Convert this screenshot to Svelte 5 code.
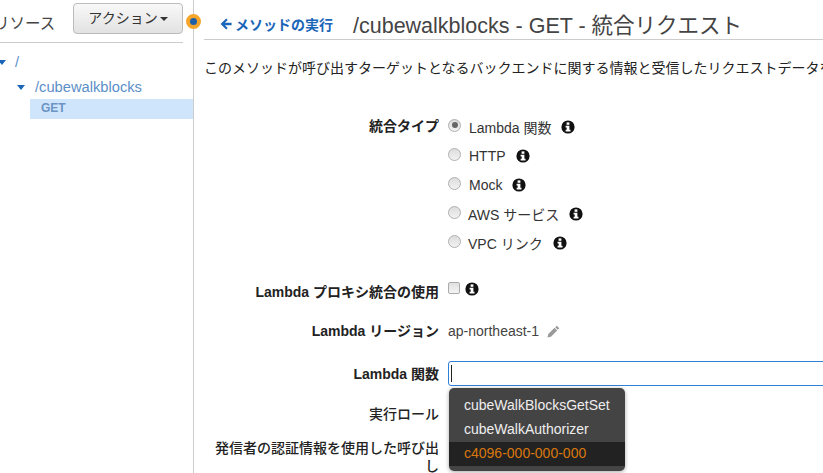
<script>
  const types = [
    { label: 'Lambda 関数', checked: true },
    { label: 'HTTP', checked: false },
    { label: 'Mock', checked: false },
    { label: 'AWS サービス', checked: false, tight: true },
    { label: 'VPC リンク', checked: false, tight: true }
  ];
  const options = ['cubeWalkBlocksGetSet', 'cubeWalkAuthorizer', 'c4096-000-000-000'];
</script>

{#snippet info()}
  <svg class="info" viewBox="0 0 14 14" aria-hidden="true">
    <circle cx="7" cy="7" r="6.6" fill="#111" />
    <rect x="5.6" y="2.4" width="2.8" height="2.4" fill="#fff" />
    <path d="M4.6 5.8h3.8v4h1.1v1.7H4.6V9.8h1.1V7.5H4.6z" fill="#fff" />
  </svg>
{/snippet}

<div class="page">
  <aside class="side">
    <div class="side-head">
      <span class="side-title">リソース</span>
      <button class="action">アクション<i class="caret"></i></button>
    </div>
    <ul class="tree">
      <li class="root"><i class="tri"></i><span>/</span></li>
      <li class="res"><i class="tri"></i><span>/cubewalkblocks</span></li>
      <li class="method">GET</li>
    </ul>
    <span class="handle"></span>
  </aside>

  <main class="main">
    <header class="head">
      <a class="back"><svg viewBox="0 0 12 12" aria-hidden="true"><path d="M6.2.6 .6 6l5.6 5.4 1.5-1.5-2.8-2.6H11.6V4.7H4.9l2.8-2.6z" /></svg>メソッドの実行</a>
      <h1>/cubewalkblocks - GET - 統合リクエスト</h1>
    </header>
    <p class="desc">このメソッドが呼び出すターゲットとなるバックエンドに関する情報と受信したリクエストデータを</p>

    <div class="form">
      <div class="row types">
        <div class="lbl strong">統合タイプ</div>
        <div class="radios">
          {#each types as t}
            <div class="radio-line" class:tight={t.tight}>
              <span class="radio" class:on={t.checked}></span>
              <span class="rtext">{t.label}</span>
              {@render info()}
            </div>
          {/each}
        </div>
      </div>

      <div class="row proxy">
        <div class="lbl strong">Lambda プロキシ統合の使用</div>
        <div class="val"><span class="check"></span>{@render info()}</div>
      </div>

      <div class="row region">
        <div class="lbl strong">Lambda リージョン</div>
        <div class="val">ap-northeast-1
          <svg class="pencil" viewBox="0 0 12 12" aria-hidden="true"><path d="M9 .6 11.4 3 10 4.4 7.6 2zM7 2.6 9.4 5 3.6 10.8.5 11.5l.7-3.1z" /></svg>
        </div>
      </div>

      <div class="row fn">
        <div class="lbl strong">Lambda 関数</div>
        <div class="input-wrap">
          <div class="input"><i class="cursor"></i></div>
          <ul class="menu">
            {#each options as o, i}
              <li class:active={i === 2}>{o}</li>
            {/each}
          </ul>
        </div>
      </div>

      <div class="row role"><div class="lbl">実行ロール</div></div>
      <div class="row caller"><div class="lbl">発信者の認証情報を使用した呼び出し</div></div>
    </div>
  </main>
</div>

<style>
  :global(body) { margin: 0; background: #fff; }
  .page {
    display: flex;
    width: 823px;
    height: 473px;
    overflow: hidden;
    font-family: "Liberation Sans", "Noto Sans CJK JP", sans-serif;
    font-size: 14px;
    color: #333;
  }
  .side {
    position: relative;
    z-index: 1;
    box-sizing: border-box;
    width: 194px;
    flex: none;
    border-right: 1px solid #ccc;
  }
  .side-head {
    box-sizing: border-box;
    display: flex;
    align-items: flex-start;
    justify-content: space-between;
    height: 43px;
    width: 183px;
    padding-top: 3px;
    border-bottom: 1px solid #ccc;
  }
  .side-title {
    font-size: 15.5px;
    color: #444;
    margin-left: -6px;
    margin-top: 9px;
    line-height: 24px;
    white-space: nowrap;
  }
  .action {
    box-sizing: border-box;
    width: 110px;
    height: 31px;
    padding: 0 0 4px;
    border: 1px solid #bbb;
    border-radius: 4px;
    background: linear-gradient(#f8f8f8, #e2e2e2);
    color: #333;
    font: inherit;
    white-space: nowrap;
  }
  .caret {
    display: inline-block;
    margin-left: 2px;
    vertical-align: 2px;
    border-top: 4px solid #333;
    border-left: 4px solid transparent;
    border-right: 4px solid transparent;
  }
  .handle {
    position: absolute;
    left: 186px;
    top: 14px;
    width: 7px;
    height: 7px;
    border-radius: 50%;
    background: #1f5fa8;
    border: 4px solid #f5a52a;
    box-sizing: content-box;
  }
  .tree { list-style: none; margin: 0; padding: 0; color: #5b8fc8; }
  .tree .tri {
    display: inline-block;
    border-top: 5px solid #1a66b8;
    border-left: 4px solid transparent;
    border-right: 4px solid transparent;
    vertical-align: 2px;
  }
  .root { display: flex; align-items: center; gap: 9px; height: 22px; margin: 8px 0 0 -2px; font-size: 14.7px; }
  .res { display: flex; align-items: center; gap: 10px; margin: 3px 0 0 17px; height: 22px; font-size: 14.7px; }
  .method {
    margin: 1px 0 0 30px;
    height: 20px;
    line-height: 19px;
    padding-left: 11px;
    background: #cfe5fc;
    color: #6b93c4;
    font-weight: 700;
    font-size: 12px;
  }
  .main { flex: 1; min-width: 0; padding-left: 10px; }
  .head {
    box-sizing: border-box;
    display: flex;
    align-items: center;
    height: 40px;
    padding-left: 16px;
    padding-top: 8px;
    border-bottom: 1px solid #ccc;
    white-space: nowrap;
  }
  .back {
    display: flex;
    align-items: center;
    gap: 3px;
    width: 118px;
    flex: none;
    color: #1a66b8;
    font-weight: 700;
    font-size: 14px;
  }
  .back svg { width: 12px; height: 12px; fill: #1a66b8; }
  h1 {
    margin: 0 0 0 15px;
    font-weight: 400;
    font-size: 21.5px;
    color: #444;
  }
  .desc {
    margin: 18px 0 0 0;
    white-space: nowrap;
    font-size: 14px;
    color: #222;
    line-height: 20px;
  }
  .row { display: flex; }
  .lbl {
    width: 235px;
    flex: none;
    box-sizing: border-box;
    padding-left: 10px;
    text-align: right;
    color: #222;
    font-weight: 500;
    font-size: 14px;
    line-height: 18px;
  }
  .lbl.strong { font-weight: 700; }
  .types { margin-top: 34px; }
  .types .lbl { padding-top: 5px; }
  .radios { margin-left: 9px; }
  .radio-line {
    display: flex;
    align-items: center;
    height: 29px;
    color: #333;
    font-size: 14px;
  }
  .radio {
    box-sizing: border-box;
    position: relative;
    flex: none;
    width: 13px;
    height: 13px;
    border-radius: 50%;
    border: 1px solid #b0b0b0;
    background: linear-gradient(#dcdcdc, #f2f2f2);
    margin-right: 8px;
    margin-top: -3px;
  }
  .radio.on::after {
    content: "";
    position: absolute;
    inset: 2.5px;
    border-radius: 50%;
    background: #666;
  }
  .rtext { margin-right: 10px; }
  .tight .rtext { margin-left: -1px; }
  .info { width: 14px; height: 14px; flex: none; }
  .proxy { margin-top: 23px; }
  .proxy .lbl { padding-top: 3px; }
  .val { display: flex; align-items: center; margin-left: 9px; height: 20px; color: #444; }
  .proxy .val { align-items: flex-start; padding-top: 2px; }
  .check {
    box-sizing: border-box;
    width: 12px;
    height: 12px;
    margin: 0 5px 0 0;
    border: 1px solid #aaa;
    border-radius: 2px;
    background: linear-gradient(#e0e0e0, #f4f4f4);
  }
  .region { margin-top: 19px; }
  .region .lbl { line-height: 20px; }
  .pencil { width: 13px; height: 13px; fill: #999; margin-left: 8px; }
  .fn { margin-top: 20px; align-items: center; }
  .input-wrap { position: relative; margin-left: 9px; flex: 1; min-width: 0; margin-right: -60px; }
  .input {
    box-sizing: border-box;
    height: 25px;
    border: 1px solid #2f80d8;
    border-radius: 3px;
    padding: 3px 2px;
  }
  .cursor { display: block; width: 1px; height: 17px; background: #222; }
  .menu {
    position: absolute;
    left: 1px;
    top: 27px;
    width: 176px;
    margin: 0;
    padding: 6px 0 5px;
    list-style: none;
    border-radius: 5px;
    background: #444;
    box-shadow: 0 1px 4px rgba(0, 0, 0, .35);
    color: #eee;
    font-size: 14px;
    box-sizing: border-box;
  }
  .menu li { height: 24px; line-height: 23px; padding-left: 15px; }
  .menu li.active { background: #222; color: #d9780e; }
  .role { margin-top: 19px; }
  .caller { margin-top: 16px; }
</style>
